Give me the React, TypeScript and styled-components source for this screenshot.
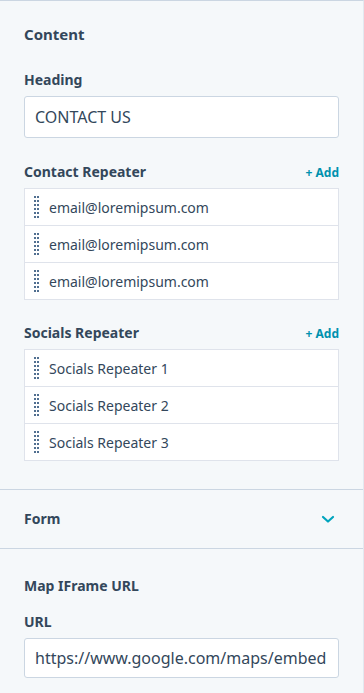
import React from "react";
import styled, { createGlobalStyle } from "styled-components";

const Global = createGlobalStyle`
  html, body { margin: 0; padding: 0; background: #f5f8fa; }
  body { font-family: "Noto Sans", "Open Sans", sans-serif; color: #33475b; }
  * { box-sizing: border-box; }
`;

const Panel = styled.div`
  width: 364px;
  min-height: 693px;
  background: #f5f8fa;
  border-top: 1px solid #cbd6e2;
  border-right: 1px solid #e3e9f0;
  display: flex;
  flex-direction: column;
`;

const Section = styled.section<{ $top: number; $bottom: number }>`
  padding: ${(p) => p.$top}px 24px ${(p) => p.$bottom}px 24px;
  display: flex;
  flex-direction: column;
  border-bottom: 1px solid #cbd6e2;
  &:last-child { border-bottom: none; }
`;

const SectionTitle = styled.h2`
  margin: 0;
  font-size: 15px;
  line-height: 18px;
  font-weight: 700;
  color: #33475b;
`;

const Label = styled.div<{ $mt: number }>`
  margin-top: ${(p) => p.$mt}px;
  font-size: 14px;
  line-height: 18px;
  font-weight: 700;
  color: #33475b;
`;

const LabelRow = styled.div<{ $mt: number }>`
  margin-top: ${(p) => p.$mt}px;
  display: flex;
  justify-content: space-between;
  align-items: center;
  height: 18px;
`;

const AddLink = styled.span`
  font-size: 12px;
  font-weight: 700;
  color: #0091ae;
`;

const TextInput = styled.div<{ $h: number }>`
  margin-top: 7px;
  height: ${(p) => p.$h}px;
  width: 315px;
  background: #fff;
  border: 1px solid #cbd6e2;
  border-radius: 3px;
  padding: 0 10px;
  display: flex;
  align-items: center;
  font-size: 16px;
  color: #33475b;
  white-space: nowrap;
  overflow: hidden;
`;

const InputText = styled.span`
  display: block;
  overflow: hidden;
  white-space: nowrap;
  max-width: 100%;
`;

const List = styled.div`
  margin-top: 7px;
  width: 315px;
  background: #fff;
  border: 1px solid #dfe3eb;
  display: flex;
  flex-direction: column;
`;

const Row = styled.div`
  height: 37px;
  display: flex;
  align-items: center;
  padding-left: 9px;
  gap: 10px;
  font-size: 14px;
  color: #33475b;
  border-top: 1px solid #dfe3eb;
  &:first-child { border-top: none; height: 36px; }
`;

const Handle = styled.span`
  display: grid;
  grid-template-columns: 2px 2px;
  grid-auto-rows: 2px;
  column-gap: 1px;
  row-gap: 2px;
  span { background: #516f90; }
`;

const Collapse = styled.div`
  height: 59px;
  padding: 0 24px;
  display: flex;
  align-items: center;
  justify-content: space-between;
  border-bottom: 1px solid #cbd6e2;
`;

const DragHandle = () => (
  <Handle>
    {Array.from({ length: 12 }).map((_, i) => (
      <span key={i} />
    ))}
  </Handle>
);

const Chevron = () => (
  <svg width="14" height="9" viewBox="0 0 14 9" style={{ marginRight: 4 }}>
    <path d="M2 2 L7 6.5 L12 2" fill="none" stroke="#00a4bd" strokeWidth="2.2" strokeLinecap="round" strokeLinejoin="round" />
  </svg>
);

const emails = ["email@loremipsum.com", "email@loremipsum.com", "email@loremipsum.com"];
const socials = ["Socials Repeater 1", "Socials Repeater 2", "Socials Repeater 3"];

export default function App() {
  return (
    <>
      <Global />
      <Panel>
        <Section $top={24} $bottom={28}>
          <SectionTitle>Content</SectionTitle>
          <Label $mt={28}>Heading</Label>
          <TextInput $h={42}>CONTACT US</TextInput>
          <LabelRow $mt={25}>
            <Label $mt={0}>Contact Repeater</Label>
            <AddLink>+ Add</AddLink>
          </LabelRow>
          <List>
            {emails.map((e, i) => (
              <Row key={i}>
                <DragHandle />
                {e}
              </Row>
            ))}
          </List>
          <LabelRow $mt={24}>
            <Label $mt={0}>Socials Repeater</Label>
            <AddLink>+ Add</AddLink>
          </LabelRow>
          <List>
            {socials.map((s, i) => (
              <Row key={i}>
                <DragHandle />
                {s}
              </Row>
            ))}
          </List>
        </Section>
        <Collapse>
          <Label $mt={0}>Form</Label>
          <Chevron />
        </Collapse>
        <Section $top={28} $bottom={20}>
          <Label $mt={0}>Map IFrame URL</Label>
          <Label $mt={18}>URL</Label>
          <TextInput $h={40}>
            <InputText>https://www.google.com/maps/embed</InputText>
          </TextInput>
        </Section>
      </Panel>
    </>
  );
}
